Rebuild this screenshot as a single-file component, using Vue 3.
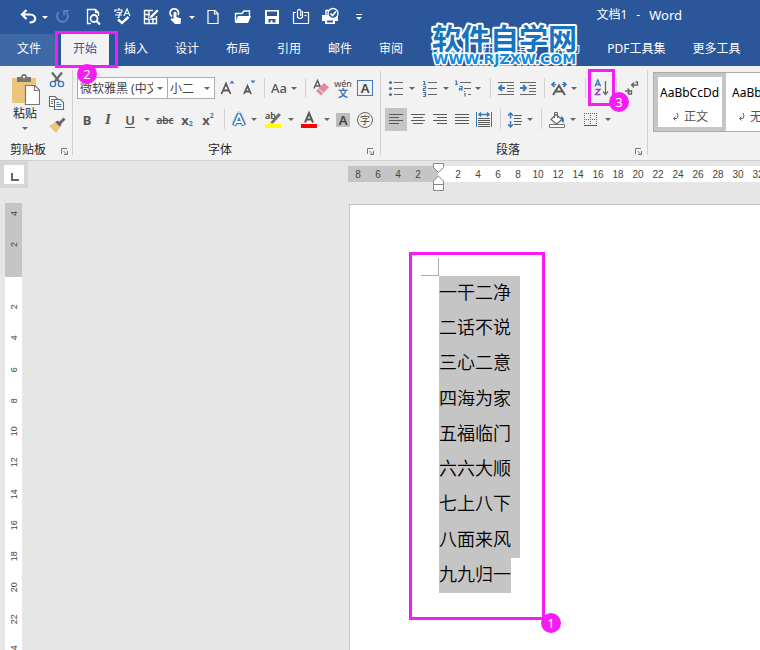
<script setup>
import { ref } from 'vue'

const fontName = ref('微软雅黑 (中文正文)')
const fontSize = ref('小二')

const tabs = ['插入', '设计', '布局', '引用', '邮件', '审阅', '视图', '开发工具', '帮助', 'PDF工具集', '更多工具']
const lines = ['一干二净', '二话不说', '三心二意', '四海为家', '五福临门', '六六大顺', '七上八下', '八面来风', '九九归一']

const rulerMargin = [8, 6, 4, 2]
const rulerBody = Array.from({ length: 16 }, (_, i) => (i + 1) * 2)
const sideMargin = [4, 2]
const sideBody = Array.from({ length: 12 }, (_, i) => (i + 1) * 2)

const styleCells = [
  { name: '正文', active: true },
  { name: '无间隔', active: false }
]
</script>

<template>
  <div class="word">
    <header class="head">
      <div class="titlebar">
        <div class="quick">
          <button class="s24" aria-label="撤消">
            <svg width="20" height="20" viewBox="0 0 20 20"><path d="M7.500 3 L3 7.500 L7.500 12 M3.500 7.500 H11 C18 7.500 18 15.500 10.500 15.500" fill="none" stroke="#fff" stroke-width="2.200" /></svg>
          </button>
          <button class="s8" aria-label="撤消列表"><i class="caret light"></i></button>
          <button class="s28" aria-label="重复">
            <svg width="20" height="20" viewBox="0 0 20 20"><path d="M6 5 A5.500 5.500 0 1 0 13.500 5.500 M10.500 4 H15.500 M11 3.500 V8.500" fill="none" stroke="#5f83b9" stroke-width="1.800" /></svg>
          </button>
          <button class="s32" aria-label="打印预览">
            <svg width="20" height="20" viewBox="0 0 20 20"><g fill="none" stroke="#fff"><path d="M8 16.500 H4.500 V2.500 H12.500 L15.500 5.500 V9 M12.500 2.500 V5.500 H15.500" stroke-width="1.300" /><circle cx="11" cy="11.500" r="3.500" stroke-width="1.800" /><path d="M13.500 14 L17 17.500" stroke-width="2.200" /></g></svg>
          </button>
          <button class="s28" aria-label="拼写检查">
            <svg width="20" height="20" viewBox="0 0 20 20"><path d="M6 1 V3 M2 5 V3 H9 V5 M3.500 5.500 H8 L6 7.500 V10.500 H4.500 M2 8 H9 M11 9 L14 2 L17 9 M12 6.500 H16" fill="none" stroke="#fff" stroke-width="1.200" /><path d="M5 12.500 L9 16 L15.500 10" fill="none" stroke="#fff" stroke-width="2.400" /></svg>
          </button>
          <button class="s28" aria-label="绘制表格">
            <svg width="20" height="20" viewBox="0 0 20 20"><path d="M12 3.500 H3.500 V16.500 H15.500 V9 M3.500 7.500 H9 M3.500 12 H15.500 M8 3.500 V16.500 M12 11 V16.500" fill="none" stroke="#fff" stroke-width="1.400" /><path d="M8 12 L9 9 L16 2 L18 4 L11 11 Z" fill="#fff" stroke="#2b579a" stroke-width=".7" /></svg>
          </button>
          <button class="s22" aria-label="触摸模式">
            <svg width="20" height="20" viewBox="0 0 20 20"><path d="M6 9.500 A4.200 4.200 0 1 1 12 8" fill="none" stroke="#fff" stroke-width="1.800" /><path d="M7.500 5.500 Q9 4 10.500 5.500 V10 L15 11.500 L14.500 17 H9 L4.500 12.500 L5.500 11 L7.500 12 Z" fill="#fff" /></svg>
          </button>
          <button class="s10" aria-label="触摸模式列表"><i class="caret light"></i></button>
          <button class="s32" aria-label="新建">
            <svg width="20" height="20" viewBox="0 0 20 20"><path d="M5 3.500 H12 L15 6.500 V16.500 H5 Z M11.500 3.500 V7 H15" fill="none" stroke="#fff" stroke-width="1.200" /></svg>
          </button>
          <button class="s28" aria-label="打开">
            <svg width="20" height="20" viewBox="0 0 20 20"><path d="M2.500 15 V6.500 H9 L11 4 H16.500 V9" fill="none" stroke="#fff" stroke-width="1.400" /><path d="M2 16 L5 9 H18 L15 16 Z" fill="#fff" /></svg>
          </button>
          <button class="s30" aria-label="保存">
            <svg width="20" height="20" viewBox="0 0 20 20"><path fill-rule="evenodd" d="M3 3 H17 V17 H3 Z M5 4.500 V9 H15 V4.500 Z M6.500 12 V15.500 H8.500 V13.500 H10.500 V15.500 H13.500 V12 Z" fill="#fff" /></svg>
          </button>
          <button class="s28" aria-label="发送邮件">
            <svg width="20" height="20" viewBox="0 0 20 20"><g fill="none" stroke="#fff" stroke-width="1.200"><path d="M5 5.500 H2.500 V16.500 H17.500 V5.500 H13" /><path d="M11.500 4 V10 Q9 13 6.500 10 V4 Q8 1 9.800 3.500 V9" /><path d="M13.500 8.500 H15.500" /></g></svg>
          </button>
          <button class="s30" aria-label="快速打印">
            <svg width="20" height="20" viewBox="0 0 20 20"><path d="M2 8 H18 V14 H15 V17 H5 V14 H2 Z" fill="#fff" /><path d="M6 8 V3.500 H10" fill="none" stroke="#fff" stroke-width="1.400" /><path d="M7 13.500 H13 V15.500 H7 Z" fill="#2b579a" /><circle cx="13" cy="6.500" r="5" fill="#2b579a" stroke="#fff" stroke-width="1.300" /><path d="M10.500 6.500 L12.500 8.500 L16 4.500" fill="none" stroke="#fff" stroke-width="1.600" /></svg>
          </button>
          <button class="s28" aria-label="自定义快速访问工具栏">
            <svg width="20" height="20" viewBox="0 0 20 20"><path d="M7 7 H13 V8 H7 Z M7 10 H13 L10 13 Z" fill="#fff" /></svg>
          </button>
        </div>
        <div class="doctitle"><span>文档1</span><span>-</span><span class="app">Word</span></div>
      </div>

      <nav class="tabs">
        <a href="#file" class="tab file">文件</a>
        <div class="active-wrap">
          <a href="#home" class="tab active">开始</a>
          <div class="mark mark-tab"><span class="badge">2</span></div>
        </div>
        <a v-for="t in tabs" :key="t" href="#tab" class="tab">{{ t }}</a>
      </nav>

      <svg class="watermark" width="156" height="50" viewBox="0 0 156 50">
        <text class="wm-name" x="5" y="29">软件自学网</text>
        <text class="wm-site" x="6" y="43">WWW.RJZXW.COM</text>
      </svg>
    </header>

    <section class="ribbon">
      <div class="group clipboard">
        <div class="clip-body">
          <button class="paste">
            <svg width="30" height="32" viewBox="0 0 30 32"><path d="M2 4 H26 V29 H2 Z" fill="#ecc57c" /><path d="M7 3 H11 Q11 0 14 0 Q17 0 17 3 H21 V8 H7 Z" fill="#777" /><circle cx="14" cy="3" r="1.200" fill="#f2f2f2" /><path d="M15.500 11.500 H25 L29.500 16 V30.500 H15.500 Z" fill="#fff" stroke="#777" stroke-width="1.200" /><path d="M24.500 11.500 V16.500 H29.500" fill="none" stroke="#777" stroke-width="1.200" /></svg>
            <span>粘贴</span>
            <i class="caret"></i>
          </button>
          <div class="clip-tools">
            <button aria-label="剪切">
              <svg width="20" height="20" viewBox="0 0 20 20"><path d="M5 2.500 L12.500 12 M15 2.500 L7.500 12" stroke="#666" stroke-width="2.200" /><g fill="none" stroke="#4479b3" stroke-width="1.400"><circle cx="6" cy="14" r="2.600" /><circle cx="14" cy="14" r="2.600" /></g></svg>
            </button>
            <button aria-label="复制">
              <svg width="20" height="20" viewBox="0 0 20 20"><g fill="#fff" stroke="#666" stroke-width="1.100"><path d="M2.500 3.500 H8 L10.500 6 V13.500 H2.500 Z" /><path d="M7.500 6.500 H13.500 L16.500 9.500 V16.500 H7.500 Z" /></g><path d="M4 6.500 H7 M4 8.500 H6 M4 10.500 H6 M9.500 9.500 H12 M9.500 11.500 H14.500 M9.500 13.500 H14.500" stroke="#4479b3" /></svg>
            </button>
            <button aria-label="格式刷">
              <svg width="20" height="20" viewBox="0 0 20 20"><path d="M2 10 L8 6.500 L13 11.500 L9 17 Z" fill="#ecc57c" /><path d="M8 6 L11 4.500 L14.500 8 L13 11 Z M12 6 L16.500 1.500 L18.500 3.500 L14 8 Z" fill="#666" /></svg>
            </button>
          </div>
        </div>
        <div class="caption"><span>剪贴板</span><button class="launcher" aria-label="剪贴板选项"><svg width="9" height="9" viewBox="0 0 9 9"><path d="M1.500 7 V1.500 H7 M3.500 4 L6.500 7 M7.500 4 V7.500 H4" fill="none" stroke="#777" /></svg></button></div>
      </div>

      <div class="group font">
        <div class="row">
          <label class="combo name"><select v-model="fontName" aria-label="字体名称"><option>微软雅黑 (中文正文)</option></select><i class="caret"></i></label>
          <label class="combo size"><select v-model="fontSize" aria-label="字号"><option>小二</option></select><i class="caret"></i></label>
          <button class="s24" aria-label="增大字号"><svg width="20" height="20" viewBox="0 0 20 20"><path d="M4.500 16 L9 5.500 L13.500 16 M6 12.500 H12" fill="none" stroke="#5a5a5a" stroke-width="1.800" /><path d="M12.500 5.500 L15 2.500 L17.500 5.500 Z" fill="#4479b3" /></svg></button>
          <button class="s20" aria-label="减小字号"><svg width="20" height="20" viewBox="0 0 20 20"><path d="M5 16 L8.500 8 L12 16 M6 13.500 H11" fill="none" stroke="#5a5a5a" stroke-width="1.800" /><path d="M11.500 2.500 L14 5.500 L16.500 2.500 Z" fill="#4479b3" /></svg></button>
          <span class="sep s10"></span>
          <button class="s20 glyph">Aa</button>
          <button class="s10" aria-label="更改大小写"><i class="caret"></i></button>
          <span class="sep s12"></span>
          <button class="s20" aria-label="清除格式"><svg width="20" height="20" viewBox="0 0 20 20"><path d="M3 10.500 L6.500 2.500 L10 10.500 M4.500 8 H9" fill="none" stroke="#5a5a5a" stroke-width="1.500" /><path d="M5 13 L13 5 L18 9 L10 17.500 Z" fill="#e8879b" /><path d="M7.500 10.500 L12.500 15" stroke="#f2f2f2" /></svg></button>
          <button class="s24 pinyin" aria-label="拼音指南"><span>wén</span><b>文</b></button>
          <button class="s20" aria-label="字符边框"><span class="boxed">A</span></button>
        </div>
        <div class="row second">
          <button class="s20 glyph heavy">B</button>
          <button class="s22 glyph italic">I</button>
          <button class="s22 glyph under">U</button>
          <button class="s12" aria-label="下划线样式"><i class="caret"></i></button>
          <button class="s24 strike">abc</button>
          <button class="s20 glyph heavy script">x<sub>2</sub></button>
          <button class="s22 glyph heavy script">x<sup>2</sup></button>
          <span class="sep s10"></span>
          <button class="s20" aria-label="文本效果"><svg width="20" height="20" viewBox="0 0 20 20"><path d="M5 15.500 L10 4 L15 15.500 M6.500 12 H13.500" fill="none" stroke="#c2daf3" stroke-width="6" stroke-linejoin="round" /><path d="M5 15.500 L10 4 L15 15.500 M6.500 12 H13.500" fill="none" stroke="#4479b3" stroke-width="4.200" stroke-linejoin="bevel" /><path d="M5.400 15 L10 4.500 L14.600 15 M6.500 12 H13.500" fill="none" stroke="#fff" stroke-width="1.800" stroke-linejoin="bevel" /></svg></button>
          <button class="s10" aria-label="文本效果列表"><i class="caret"></i></button>
          <button class="s28" aria-label="突出显示"><svg width="20" height="20" viewBox="0 0 20 20"><text class="tiny-ab" x="2" y="9">ab</text><path d="M7 13 L15.500 3 L18 5 L10 13.500 Z" fill="#707070" /><path d="M2 14 H18 V18 H2 Z" fill="#ff0" /></svg></button>
          <button class="s8" aria-label="突出显示颜色"><i class="caret"></i></button>
          <button class="s28" aria-label="字体颜色"><svg width="20" height="20" viewBox="0 0 20 20"><path d="M6 12.500 L10 3 L14 12.500 M7.500 9.500 H12.500" fill="none" stroke="#5a5a5a" stroke-width="2" /><path d="M2 14 H18 V18 H2 Z" fill="#f00" /></svg></button>
          <button class="s8" aria-label="字体颜色列表"><i class="caret"></i></button>
          <button class="s24" aria-label="字符底纹"><span class="shaded">A</span></button>
          <button class="s20" aria-label="带圈字符"><span class="ring">字</span></button>
        </div>
        <div class="caption"><span>字体</span><button class="launcher" aria-label="字体选项"><svg width="9" height="9" viewBox="0 0 9 9"><path d="M1.500 7 V1.500 H7 M3.500 4 L6.500 7 M7.500 4 V7.500 H4" fill="none" stroke="#777" /></svg></button></div>
      </div>

      <div class="group para">
        <div class="row">
          <button class="s22" aria-label="项目符号"><svg width="20" height="20" viewBox="0 0 20 20"><path d="M8 4.500 H17 M8 10.500 H17 M8 16.500 H17" stroke="#666" /><g fill="#4479b3"><circle cx="4.500" cy="4.500" r="1.600" /><circle cx="4.500" cy="10.500" r="1.600" /><circle cx="4.500" cy="16.500" r="1.600" /></g></svg></button>
          <button class="s10" aria-label="项目符号库"><i class="caret"></i></button>
          <button class="s24" aria-label="编号"><svg width="20" height="20" viewBox="0 0 20 20"><path d="M9 4.500 H18 M9 10.500 H18 M9 16.500 H18" stroke="#666" /><path d="M4 3.500 H5.500 V6.500 M4 6.500 H7 M4 8.500 H6.500 V10.500 H4.500 V12.500 H7 M4 14.500 H6.500 V18.500 H4 M4.500 16.500 H6.500" fill="none" stroke="#4479b3" stroke-width="1.200" /></svg></button>
          <button class="s10" aria-label="编号库"><i class="caret"></i></button>
          <button class="s22" aria-label="多级列表"><svg width="20" height="20" viewBox="0 0 20 20"><path d="M8 4.500 H19 M12 10.500 H19 M16 16.500 H19" stroke="#666" /><path d="M3 3 H4.500 V6.500 M3 6.500 H6 M7.500 8.500 H10 V12 H7.500 V10.500 H10 M12.500 13 V14 M12 15.500 H13 V18.500" fill="none" stroke="#4479b3" stroke-width="1.200" /></svg></button>
          <button class="s10" aria-label="多级列表库"><i class="caret"></i></button>
          <span class="sep s14"></span>
          <button class="s20" aria-label="减少缩进"><svg width="20" height="20" viewBox="0 0 20 20"><path d="M1 4.500 H17 M10 7.500 H17 M10 10.500 H17 M10 13.500 H17 M1 16.500 H17" stroke="#666" /><path d="M8 10 H2 M5 7 L2 10 L5 13" fill="none" stroke="#3a78b8" stroke-width="1.900" /></svg></button>
          <button class="s22" aria-label="增加缩进"><svg width="20" height="20" viewBox="0 0 20 20"><path d="M2 4.500 H18 M11 7.500 H18 M11 10.500 H18 M11 13.500 H18 M2 16.500 H18" stroke="#666" /><path d="M2 10 H8 M5 7 L8 10 L5 13" fill="none" stroke="#3a78b8" stroke-width="1.900" /></svg></button>
          <span class="sep s10"></span>
          <button class="s20" aria-label="中文版式"><svg width="20" height="20" viewBox="0 0 20 20"><path d="M4 17 L10 7.500 L16 17 M6.500 13.500 H13.500" fill="none" stroke="#5a5a5a" stroke-width="2" /><path d="M7 6.500 H3 M5.500 4 L3 6.500 L5.500 9 M13 6.500 H17 M14.500 4 L17 6.500 L14.500 9" fill="none" stroke="#3a78b8" stroke-width="1.700" /></svg></button>
          <button class="s10" aria-label="中文版式列表"><i class="caret"></i></button>
          <span class="sep s12"></span>
          <div class="sort-wrap">
            <button class="s20" aria-label="排序"><svg width="20" height="20" viewBox="0 0 20 20"><path d="M4 8.500 L6.800 2 L9.600 8.500 M5 6.500 H8.600" fill="none" stroke="#3a78b8" stroke-width="1.400" /><path d="M4.500 11.500 H9 L4.500 16.500 H9.500" fill="none" stroke="#8e4ba8" stroke-width="1.400" /><path d="M14.500 3 V16 M12 13.500 L14.500 16.500 L17 13.500" fill="none" stroke="#666" stroke-width="1.200" /></svg></button>
            <div class="mark mark-sort"><span class="badge">3</span></div>
          </div>
          <span class="sep s10"></span>
          <button class="s22" aria-label="显示编辑标记"><svg width="20" height="20" viewBox="0 0 20 20"><path d="M15.500 4 V7 H10 M12 4.500 L9.500 7 L12 9.500 M13.500 4 H16 M3 13 H7.500 M5.500 10.500 L8 13 L5.500 15.500 M9.500 12 V16 H6" fill="none" stroke="#666" stroke-width="1.300" /></svg></button>
        </div>
        <div class="row second">
          <button class="s22 on" aria-label="左对齐"><svg width="20" height="20" viewBox="0 0 20 20"><path d="M3 4.500 H17 M3 7.500 H13 M3 10.500 H17 M3 13.500 H13" stroke="#5a5a5a" /></svg></button>
          <button class="s22" aria-label="居中"><svg width="20" height="20" viewBox="0 0 20 20"><path d="M3 4.500 H17 M5 7.500 H15 M3 10.500 H17 M5 13.500 H15" stroke="#5a5a5a" /></svg></button>
          <button class="s22" aria-label="右对齐"><svg width="20" height="20" viewBox="0 0 20 20"><path d="M3 4.500 H17 M7 7.500 H17 M3 10.500 H17 M7 13.500 H17" stroke="#5a5a5a" /></svg></button>
          <button class="s22" aria-label="两端对齐"><svg width="20" height="20" viewBox="0 0 20 20"><path d="M3 4.500 H17 M3 7.500 H17 M3 10.500 H17 M3 13.500 H17" stroke="#5a5a5a" /></svg></button>
          <button class="s22" aria-label="分散对齐"><svg width="20" height="20" viewBox="0 0 20 20"><path d="M4 8.500 H16 M4 10.500 H16 M4 12.500 H16 M4 14.500 H16 M4 16.500 H16" stroke="#5a5a5a" /><path d="M2.500 2 V17 M17.500 2 V17" stroke="#3a78b8" /><path d="M5 4.500 H15 M7 2.500 L5 4.500 L7 6.500 M13 2.500 L15 4.500 L13 6.500" fill="none" stroke="#3a78b8" stroke-width="1.500" /></svg></button>
          <span class="sep s10"></span>
          <button class="s20" aria-label="行距"><svg width="20" height="20" viewBox="0 0 20 20"><path d="M9 5.500 H17 M9 8.500 H16 M9 11.500 H17 M9 14.500 H16" stroke="#5a5a5a" /><path d="M5.500 3 V8.500 M3 5.500 L5.500 3 L8 5.500 M5.500 11 V17 M3 14.500 L5.500 17 L8 14.500" fill="none" stroke="#3a78b8" stroke-width="1.500" /></svg></button>
          <button class="s10" aria-label="行距列表"><i class="caret"></i></button>
          <span class="sep s12"></span>
          <button class="s20" aria-label="底纹"><svg width="20" height="20" viewBox="0 0 20 20"><path d="M14 6 Q18.500 8 16.500 13 Q14 12 14 6" fill="#3a78b8" /><path d="M4 9.500 L9 4.500 L15 9.500 L9.500 14 Z" fill="#fff" stroke="#666" stroke-width="1.200" /><path d="M7.500 8 V2.500 H10.500 V8" fill="none" stroke="#666" /><path d="M2.500 14.500 H17.500 V17.500 H2.500 Z" fill="#fff" stroke="#777" /></svg></button>
          <button class="s12" aria-label="底纹颜色"><i class="caret"></i></button>
          <button class="s24" aria-label="边框"><svg width="20" height="20" viewBox="0 0 20 20"><path d="M3 3.500 H16 M3 9.500 H16 M3.500 3 V15 M9.500 3 V15 M15.500 3 V15" stroke="#666" stroke-dasharray="1 1" /><path d="M3 15.500 H16" stroke="#555" /></svg></button>
          <button class="s10" aria-label="边框列表"><i class="caret"></i></button>
        </div>
        <div class="caption"><span>段落</span><button class="launcher" aria-label="段落选项"><svg width="9" height="9" viewBox="0 0 9 9"><path d="M1.500 7 V1.500 H7 M3.500 4 L6.500 7 M7.500 4 V7.500 H4" fill="none" stroke="#777" /></svg></button></div>
      </div>

      <div class="gallery">
        <button v-for="s in styleCells" :key="s.name" class="cell" :class="{ picked: s.active }">
          <span class="sample">AaBbCcDdE</span>
          <span class="cellname"><svg width="8" height="10" viewBox="0 0 8 10"><path d="M5 1 Q7 4 5 6.500 H1.500 M3.500 4.500 L1.500 6.500 L3.500 8.500" fill="none" stroke="#666" /></svg>{{ s.name }}</span>
        </button>
      </div>
    </section>

    <main class="work">
      <aside class="side">
        <button class="tabstop" aria-label="制表符"><svg width="10" height="10" viewBox="0 0 10 10"><path d="M2 1 V8 H9" fill="none" stroke="#666" stroke-width="2" /></svg></button>
        <div class="vruler">
          <div class="vmargin"><span v-for="n in sideMargin" :key="n">{{ n }}</span></div>
          <div class="vbody"><span v-for="n in sideBody" :key="n">{{ n }}</span></div>
        </div>
      </aside>
      <div class="canvas">
        <div class="hruler">
          <div class="hmargin"><span v-for="n in rulerMargin" :key="n">{{ n }}</span></div>
          <div class="hbody">
            <svg class="indent" width="11" height="28" viewBox="0 0 11 28"><path d="M.5 .5 H10.500 V4.500 L5.500 9.500 L.5 4.500 Z M5.500 13 L10.500 18 V27.500 H.5 V18 Z M.5 21.500 H10.500" fill="#fff" stroke="#888" /></svg>
            <span v-for="n in rulerBody" :key="n">{{ n }}</span>
          </div>
        </div>
        <article class="page">
          <div class="textarea">
            <i class="corner"></i>
            <div class="lines">
              <p v-for="(l, i) in lines" :key="l" :class="{ last: i === lines.length - 1 }">{{ l }}</p>
            </div>
            <div class="mark mark-text"><span class="badge">1</span></div>
          </div>
        </article>
      </div>
    </main>
  </div>
</template>

<style>
body {
  overflow: hidden;
}
</style>

<style scoped>
.word {
  display: flex;
  flex-direction: column;
  height: 100vh;
  overflow: hidden;
  background: #e6e6e6;
  color: #262626;
  font: 12px/16px "Noto Sans", "Noto Sans CJK SC", sans-serif;
}
.word * {
  box-sizing: border-box;
}
button {
  display: flex;
  align-items: center;
  justify-content: center;
  flex: none;
  height: 100%;
  margin: 0;
  padding: 0;
  border: 0;
  background: none;
  color: inherit;
  font: inherit;
}
svg {
  display: block;
  flex: none;
}
.s8 { width: 8px; }
.s10 { width: 10px; }
.s12 { width: 12px; }
.s14 { width: 14px; }
.s20 { width: 20px; }
.s22 { width: 22px; }
.s24 { width: 24px; }
.s28 { width: 28px; }
.s30 { width: 30px; }
.s32 { width: 32px; }
.caret {
  display: block;
  flex: none;
  border: 3px solid transparent;
  border-top-color: #666;
  border-bottom: 0;
}
.caret.light {
  border-top-color: #fff;
}

.head {
  position: relative;
  flex: none;
  background: #2b579a;
  color: #fff;
}
.titlebar {
  display: flex;
  align-items: center;
  justify-content: space-between;
  height: 34px;
  padding: 0 78px 0 17px;
}
.quick {
  display: flex;
  height: 34px;
}
.doctitle {
  display: flex;
  gap: 9px;
  padding-bottom: 4px;
}
.app {
  font-size: 13px;
}
.tabs {
  display: flex;
  gap: 3px;
  height: 32px;
  white-space: nowrap;
}
.tab {
  display: block;
  flex: none;
  padding: 7px 12px 9px;
  color: #fff;
  text-decoration: none;
}
.tab.file {
  margin-right: 3px;
  padding: 7px 14px 9px 17px;
  background: #3e68a6;
}
.active-wrap {
  position: relative;
}
.tab.active {
  height: 32px;
  background: #f2f2f2;
  color: #2b579a;
}
.mark {
  position: absolute;
  z-index: 5;
  border: 3px solid #f51cf5;
  pointer-events: none;
}
.badge {
  position: absolute;
  width: 20px;
  height: 20px;
  border-radius: 50%;
  background: #f51cf5;
  color: #fff;
  font-size: 13px;
  line-height: 20px;
  text-align: center;
}
.mark-tab {
  inset: -3px -9px -2px -6px;
}
.mark-tab .badge {
  top: 30px;
  left: 19px;
}
.watermark {
  position: absolute;
  top: 21px;
  left: 427px;
}
.watermark text {
  paint-order: stroke;
  stroke: #fff;
  stroke-linejoin: round;
}
.wm-name {
  fill: #1673c0;
  stroke-width: 4px;
  font: 700 29px "Noto Sans CJK SC", sans-serif;
}
.wm-site {
  fill: #168bdc;
  stroke-width: 3px;
  font: 700 14px "DejaVu Sans", sans-serif;
}

.ribbon {
  display: flex;
  flex: none;
  height: 95px;
  border-bottom: 1px solid #d0d0d0;
  background: #f2f2f2;
}
.group {
  display: flex;
  flex: none;
  flex-direction: column;
  margin: 4px 0 5px;
  padding-top: 7px;
  border-right: 1px solid #d2d2d2;
}
.font {
  padding-left: 4px;
  padding-right: 5px;
}
.para {
  padding-left: 4px;
  padding-right: 4px;
}
.row {
  display: flex;
  height: 22px;
}
.second {
  height: 23px;
  margin-top: 9px;
}
.sep::before {
  content: "";
  display: block;
  width: 1px;
  height: 20px;
  margin: 1px auto;
  background: #d2d2d2;
}
.caption {
  display: flex;
  align-items: center;
  height: 16px;
  margin-top: auto;
}
.caption span {
  flex: 1;
  padding-top: 5px;
  text-align: center;
}
.launcher {
  width: 16px;
  padding-top: 9px;
}
.font .launcher,
.para .launcher {
  justify-content: flex-end;
  width: 12px;
}

.clipboard {
  width: 73px;
  padding-top: 0;
}
.clip-body {
  display: flex;
  gap: 7px;
  padding-left: 10px;
}
.paste {
  flex-direction: column;
  justify-content: flex-start;
  width: 30px;
  height: 66px;
  padding-top: 4px;
}
.paste span {
  margin-bottom: 5px;
}
.clip-tools {
  display: flex;
  flex-direction: column;
  gap: 3px;
}
.clip-tools button {
  width: 20px;
  height: 20px;
}

.combo {
  display: flex;
  align-items: center;
  flex: none;
  border: 1px solid #ababab;
  background: #fff;
}
.combo select {
  flex: 1;
  width: 0;
  min-width: 0;
  height: 20px;
  padding: 2px 0 0 2px;
  border: 0;
  outline: 0;
  appearance: none;
  background: none;
  color: #444;
  font: inherit;
  text-overflow: clip;
}
.combo .caret {
  margin: 0 4px;
}
.name {
  width: 91px;
}
.size {
  width: 47px;
  border-left: 0;
}
.glyph {
  color: #555;
  font-size: 13px;
  font-weight: 500;
}
.heavy {
  font-weight: 700;
}
.italic {
  font: italic 700 15px "Liberation Serif", serif;
}
.under {
  font-weight: 600;
  text-decoration: underline;
  text-underline-offset: 2px;
}
.strike {
  color: #555;
  font-size: 10px;
  font-weight: 600;
  text-decoration: line-through;
}
.script sub,
.script sup {
  color: #3a78b8;
  font-size: 7px;
  line-height: 8px;
}
.script sub {
  align-self: flex-end;
  padding-bottom: 3px;
}
.script sup {
  align-self: flex-start;
  padding-top: 4px;
}
.pinyin {
  flex-direction: column;
  color: #444;
  font-size: 9px;
  line-height: 9px;
}
.pinyin b {
  color: #3a78b8;
  font-size: 10px;
  line-height: 10px;
}
.boxed {
  width: 16px;
  height: 16px;
  border: 1px solid #4479b3;
  color: #444;
  font-size: 13px;
  font-weight: 600;
  line-height: 14px;
}
.shaded {
  width: 14px;
  height: 14px;
  background: #bdbdbd;
  color: #444;
  font-size: 13px;
  font-weight: 600;
  line-height: 14px;
}
.ring {
  width: 16px;
  height: 16px;
  border: 1px solid #666;
  border-radius: 50%;
  color: #444;
  font-size: 10px;
  line-height: 14px;
}
.tiny-ab {
  fill: #444;
  font: 600 9px "Noto Sans", sans-serif;
}
.on {
  background: #c5c5c5;
}
.sort-wrap {
  position: relative;
}
.mark-sort {
  inset: -8px -4px -7px -3px;
}
.mark-sort .badge {
  top: 20px;
  left: 18px;
}

.gallery {
  display: flex;
  flex: 1;
  min-width: 0;
  height: 60px;
  margin: 6px 0 0 5px;
  overflow: hidden;
  border: 1px solid #ababab;
  border-right: 0;
  background: #fff;
}
.cell {
  flex-direction: column;
  justify-content: flex-start;
  width: 72px;
  height: 58px;
  padding: 12px 6px 0;
  overflow: hidden;
}
.cell.picked {
  padding: 8px 2px 0;
  border: 4px solid #c5c5c5;
}
.sample {
  width: 60px;
  overflow: hidden;
  color: #000;
  font-size: 12px;
  text-align: left;
  white-space: nowrap;
}
.cellname {
  display: flex;
  align-items: center;
  gap: 4px;
  padding-top: 8px;
  color: #555;
  white-space: nowrap;
}

.work {
  display: flex;
  flex: 1;
  min-height: 0;
  overflow: hidden;
}
.side {
  flex: none;
  width: 28px;
}
.tabstop {
  width: 28px;
  height: 27px;
  border: 4px solid #d6d6d6;
  background: #fff;
  padding: 4px 0 0 2px;
}
.vruler {
  width: 17px;
  margin: 15px 0 0 5px;
  background: #fff;
  color: #444;
  font: 9px/12px "Liberation Sans", sans-serif;
}
.vruler span {
  display: flex;
  align-items: center;
  justify-content: center;
  flex: 1;
  writing-mode: vertical-rl;
  transform: rotate(180deg);
}
.vmargin {
  display: flex;
  flex-direction: column;
  gap: 11px;
  height: 74px;
  padding-bottom: 23px;
  background: #c5c5c5;
}
.vbody {
  display: flex;
  flex-direction: column;
  height: 389px;
  padding-top: 14px;
}
.canvas {
  display: flex;
  flex: 1;
  flex-direction: column;
  min-width: 0;
  padding: 5px 0 0 320px;
}
.hruler {
  display: flex;
  flex: none;
  height: 16px;
  background: #fff;
  color: #444;
  font: 10px/17px "Liberation Sans", sans-serif;
}
.hruler span {
  flex: none;
  width: 20px;
  text-align: center;
}
.hmargin {
  display: flex;
  flex: none;
  width: 90px;
  background: #c5c5c5;
}
.hbody {
  position: relative;
  display: flex;
  flex: 1;
  min-width: 0;
  padding-left: 10px;
}
.indent {
  position: absolute;
  top: -3px;
  left: -5px;
}
.page {
  flex: 1;
  margin: 22px 0 0 1px;
  padding: 71px 0 0 89px;
  border: 1px solid #c6c6c6;
  border-width: 1px 0 0 1px;
  background: #fff;
}
.textarea {
  position: relative;
  width: 81px;
}
.corner {
  position: absolute;
  top: -18px;
  left: -18px;
  width: 18px;
  height: 18px;
  border: 1px solid #ababab;
  border-width: 0 1px 1px 0;
}
.lines {
  display: grid;
  grid-auto-rows: 1fr;
  height: 317px;
}
.lines p {
  margin: 0;
  background: #c5c5c5;
  color: #000;
  font: 350 18px/30px "Noto Sans CJK SC", sans-serif;
}
.lines .last {
  width: 72px;
}
.mark-text {
  inset: -24px -25px -27px -30px;
}
.mark-text .badge {
  right: -19px;
  bottom: -16px;
}
</style>
